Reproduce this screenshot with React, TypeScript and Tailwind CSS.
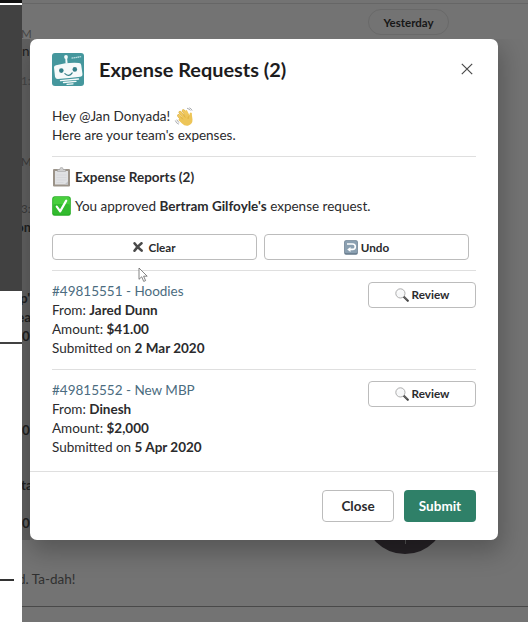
import React from "react";

function RobotLogo() {
  return (
    <svg viewBox="0 0 32 33" className="-mt-px h-[33px] w-8 shrink-0">
      <rect width="32" height="33" rx="3" fill="#45979d" />
      <path d="M13.300 5h1.800l.5 5.500h-2z" fill="#f4fafa" />
      <circle cx="14" cy="4" r="1.900" fill="#f4fafa" />
      <path d="M19.500 5.200l10-1.600" stroke="#b9dcdf" strokeWidth="1.300" strokeDasharray="1.600 .4" />
      <path d="M4 12.200Q16 9.200 27 10q2 .2 2.200 2l1.300 9.200q.2 2.200-2.200 2.500-11 1.300-22.500 2.200-2.300 0-2.800-2.200L2 14.600q-.1-2 2-2.400z" fill="#f6fafa" />
      <circle cx="9.300" cy="17.600" r="2.300" fill="#347f88" />
      <circle cx="22.800" cy="16.400" r="2.300" fill="#347f88" />
      <path d="M12.900 20.600q4.300 3.800 7.300-.7" fill="none" stroke="#347f88" strokeWidth="1.200" strokeLinecap="round" />
      <path d="M8.500 27.700l18-1.700M11.500 29.500l12.500-1.200M15 31.300l6-.5" stroke="#f4fafa" strokeWidth="1.300" strokeLinecap="round" />
    </svg>
  );
}

function Wave() {
  return (
    <svg viewBox="0 0 20 20" className="h-5 w-5 shrink-0">
      <g fill="none" strokeLinecap="round">
        <path d="M4.600 8.600l5 6M6 5.300l6 7M9.300 3.700l5 7" stroke="#d5aa3e" strokeWidth="2.900" />
        <path d="M4.600 8.600l5 6M6 5.300l6 7M9.300 3.700l5 7M12.200 4.300l2.500 5" stroke="#f0c85e" strokeWidth="2.300" />
      </g>
      <path d="M6 10.500L13.500 7l2 1.800q-.4-3 1.500-3.400 1.300.2.900 2.600l.6 4.500q.2 4.500-4 6-3.700.8-6.500-2L4.300 13z" fill="#edc558" />
      <path d="M6.500 9.700l2.300 2.600M9.200 7.600l2.200 2.900M15.500 8.800q-2 1-1.400 3.200" fill="none" stroke="#d4a233" strokeWidth=".6" />
      <path d="M1.300 13.500q.7 2.700 3.600 3.700M2.800 12.600q.6 2 2.500 2.900M13 1.200q2.200.5 3.300 2.300M15.300.8q2.100.8 2.800 2.800" fill="none" stroke="#85888c" strokeWidth=".7" />
    </svg>
  );
}

function Clipboard() {
  return (
    <svg viewBox="0 0 19 20" className="h-5 w-[19px] shrink-0">
      <rect x="1" y="2" width="17" height="17.500" rx="1" fill="#9b9389" />
      <path d="M3 4h13v13.500H3z" fill="#e0e1e3" />
      <path d="M4.500 8h10M4.500 10.500h10M4.500 13h10M4.500 15.500h7" stroke="#d2d4d7" strokeWidth=".7" />
      <path d="M12.500 17.500l3.500-3.200v3.200z" fill="#c2c4c7" />
      <path d="M5.500 2.500h2.200q.2-2.200 1.800-2.200t1.800 2.200h2.200v2h-8z" fill="#cfcfcf" stroke="#9a9a9a" strokeWidth=".5" />
    </svg>
  );
}

function CheckBadge() {
  return (
    <svg viewBox="0 0 20 20" className="h-5 w-[19px] shrink-0" preserveAspectRatio="none">
      <rect x=".2" y=".2" width="19.600" height="19.600" rx="2.500" fill="#27ad25" />
      <rect x="1.200" y="1" width="17.600" height="16" rx="2" fill="#48cf3d" />
      <rect x="1.200" y="8" width="17.600" height="10.500" rx="2" fill="#32bb2e" />
      <path d="M5 10.600l3.600 4.800L15 4.700" fill="none" stroke="#fff" strokeWidth="2.300" strokeLinecap="round" strokeLinejoin="round" />
    </svg>
  );
}

function UndoBadge() {
  return (
    <svg viewBox="0 0 14 15" className="h-[15px] w-3.5 shrink-0">
      <rect x=".2" y=".2" width="13.600" height="14.600" rx="1.800" fill="#65798b" />
      <rect x=".9" y=".8" width="12.200" height="12.400" rx="1.500" fill="#8ba0b1" />
      <path d="M3 4h5.600a2.700 2.700 0 0 1 0 5.400H6" fill="none" stroke="#fff" strokeWidth="1.600" />
      <path d="M6.500 6.900v5L3.200 9.400z" fill="#fff" />
    </svg>
  );
}

function Magnifier() {
  return (
    <svg viewBox="0 0 14 14" className="h-3.5 w-3.5 shrink-0">
      <path d="M8.800 8.800l4 4" stroke="#444" strokeWidth="2.100" strokeLinecap="round" />
      <path d="M9 8.600l3.300 3.300" stroke="#999" strokeWidth=".6" />
      <circle cx="5.400" cy="5.400" r="4.600" fill="#f7f8f9" stroke="#a5a5a5" strokeWidth=".9" />
      <path d="M2.700 5a3 3 0 0 1 2.500-2.400" fill="none" stroke="#fff" strokeWidth=".9" />
    </svg>
  );
}

function Cross() {
  return (
    <svg viewBox="0 0 10 10" className="h-2.5 w-2.5 shrink-0">
      <path d="M1.600 1.400Q4 5 8.600 8.600M8.500 1.300Q5 4 1.500 8.700" fill="none" stroke="#4a4a4a" strokeWidth="2.600" strokeLinecap="round" />
    </svg>
  );
}

function Pointer() {
  return (
    <svg viewBox="0 0 10 16" className="absolute left-[108px] top-[228px] h-4 w-2.5">
      <path d="M1 1v11.300l2.700-2.500 2 4.600 1.900-.8-2-4.400h3.600z" fill="#fff" stroke="#666" strokeWidth=".8" />
    </svg>
  );
}

function Expense(props: { title: string; from: string; amount: string; date: string }) {
  return (
    <section className="flex justify-between">
      <div className="text-[13.5px] leading-[19px]">
        <p className="text-[#4b6c80]">{props.title}</p>
        <p>From: <b>{props.from}</b></p>
        <p>Amount: <b>{props.amount}</b></p>
        <p>Submitted on <b>{props.date}</b></p>
      </div>
      <button className="flex h-[26px] w-[108px] items-center justify-center gap-[3px] rounded-[4px] border border-[#bcbcbc] text-[11.7px] font-bold">
        <Magnifier />
        <span>Review</span>
      </button>
    </section>
  );
}

function Peek(props: { className: string; children: string }) {
  return <div className={`flex h-5 shrink-0 items-center whitespace-nowrap ${props.className}`}>{props.children}</div>;
}

function Backdrop() {
  return (
    <div className="flex h-full">
      <aside className="z-10 flex w-[22px] shrink-0 flex-col bg-white">
        <div className="h-[3px] bg-[#111]" />
        <div className="h-[2px] bg-white" />
        <div className="h-[286px] bg-[#414141]" />
        <div className="mt-[51px] h-[2px] bg-[#414141]" />
        <div className="mt-[235px] h-[2px] w-[14px] bg-[#333]" />
      </aside>
      <main className="flex min-w-0 flex-1 flex-col bg-[#737373]">
        <div className="flex h-[39px] justify-end pt-[3px]">
          <div className="flex w-full justify-between border-t border-[#666]">
            <Peek className="-ml-px mt-5 text-[11.5px] text-[#444]">M</Peek>
            <div className="mr-[79px] mt-[5px] flex h-[26px] w-[81px] items-center justify-center rounded-full border border-[#696969] pt-px text-[11.5px] font-bold text-[#171717]">Yesterday</div>
          </div>
        </div>
        <div className="flex h-[501px] w-2 flex-col bg-[#606060] text-[13.5px] text-[#202020]">
          <Peek className="mt-[2px]">no</Peek>
          <Peek className="mt-[10px] -ml-px text-[11.5px] text-[#444]">1:</Peek>
          <Peek className="mt-[61px] -ml-px text-[11.5px] text-[#3a3a3a]">M</Peek>
          <Peek className="mt-[27px] -ml-px text-[11.5px] text-[#3a3a3a]">3:</Peek>
          <Peek className="-mt-[2px] -ml-[6px] font-bold">om</Peek>
          <Peek className="mt-[51px] -ml-[2px] font-bold">p'</Peek>
          <Peek className="-mt-[1px] -ml-[5px] font-bold">ea</Peek>
          <Peek className="-mt-[1px] font-bold">0</Peek>
          <Peek className="mt-[74px] font-bold">0</Peek>
          <Peek className="mt-[35px] -ml-px font-bold">ta</Peek>
          <Peek className="mt-[18px] font-bold">0</Peek>
        </div>
        <div className="flex h-[67px] items-start justify-between border-b border-[#494949]">
          <p className="-ml-1 mt-[30px] text-[13.5px] leading-[19px] text-[#303030]">d. Ta-dah!</p>
          <div className="-mt-[68px] mr-[82px] flex h-[82px] w-[82px] items-end justify-center rounded-full bg-[#262226] pb-[10px]">
            <div className="h-4 w-px bg-[#555]" />
          </div>
        </div>
      </main>
    </div>
  );
}

export default function App() {
  return (
    <div className="relative h-[622px] w-[528px] overflow-hidden font-['Lato',sans-serif] text-[#2b2b2d]">
      <Backdrop />
      <div role="dialog" className="absolute left-[30px] top-[39px] z-20 flex h-[501px] w-[468px] flex-col rounded-[7px] bg-white shadow-[2px_10px_24px_2px_rgba(0,0,0,0.25)] [clip-path:inset(0_-40px_-60px_-8px)]">
        <header className="flex h-[62px] items-center pl-[22px] pr-[25px]">
          <RobotLogo />
          <h1 className="ml-[15px] flex-1 text-[19.9px] font-bold text-[#1d1c1d]">Expense Requests (2)</h1>
          <svg viewBox="0 0 12 12" className="-mt-0.5 h-3 w-3"><path d="M.8.8l10.400 10.400M11.200.8L.8 11.200" stroke="#4a4a4a" strokeWidth="1.200" /></svg>
        </header>
        <div className="flex h-[370px] flex-col px-[22px]">
          <div className="mt-[6px] text-[13.5px] leading-[19px]">
            <p className="flex h-[19px] items-center gap-1">Hey @Jan Donyada! <Wave /></p>
            <p>Here are your team's expenses.</p>
          </div>
          <hr className="mt-[11px] border-[#dfdfdf]" />
          <div className="mt-[10px] flex h-5 items-center gap-1 text-[13.5px] font-bold"><Clipboard />Expense Reports (2)</div>
          <div className="mt-[9px] flex h-5 items-center gap-1 text-[13.5px]"><CheckBadge /><p>You approved <b>Bertram Gilfoyle's</b> expense request.</p></div>
          <div className="mt-[18px] flex gap-[7px] text-[11.7px] font-bold">
            <button className="flex h-[26px] w-[205px] items-center justify-center gap-[5px] rounded-[4px] border border-[#bcbcbc]"><Cross /><span className="pt-px">Clear</span></button>
            <button className="flex h-[26px] w-[205px] items-center justify-center gap-[3px] rounded-[4px] border border-[#bcbcbc]"><UndoBadge /><span className="pt-px">Undo</span></button>
          </div>
          <hr className="mb-[11px] mt-[10px] border-[#dfdfdf]" />
          <Expense title="#49815551 - Hoodies" from="Jared Dunn" amount="$41.00" date="2 Mar 2020" />
          <hr className="mb-[11px] mt-[11px] border-[#dfdfdf]" />
          <Expense title="#49815552 - New MBP" from="Dinesh" amount="$2,000" date="5 Apr 2020" />
        </div>
        <footer className="flex flex-1 items-center justify-end gap-[10px] border-t border-[#dfdfdf] pr-[22px] text-[13.5px] font-bold">
          <button className="h-8 w-[72px] rounded-[4px] border border-[#bcbcbc]">Close</button>
          <button className="h-8 w-[72px] rounded-[4px] bg-[#2f8068] text-white">Submit</button>
        </footer>
        <Pointer />
      </div>
    </div>
  );
}
